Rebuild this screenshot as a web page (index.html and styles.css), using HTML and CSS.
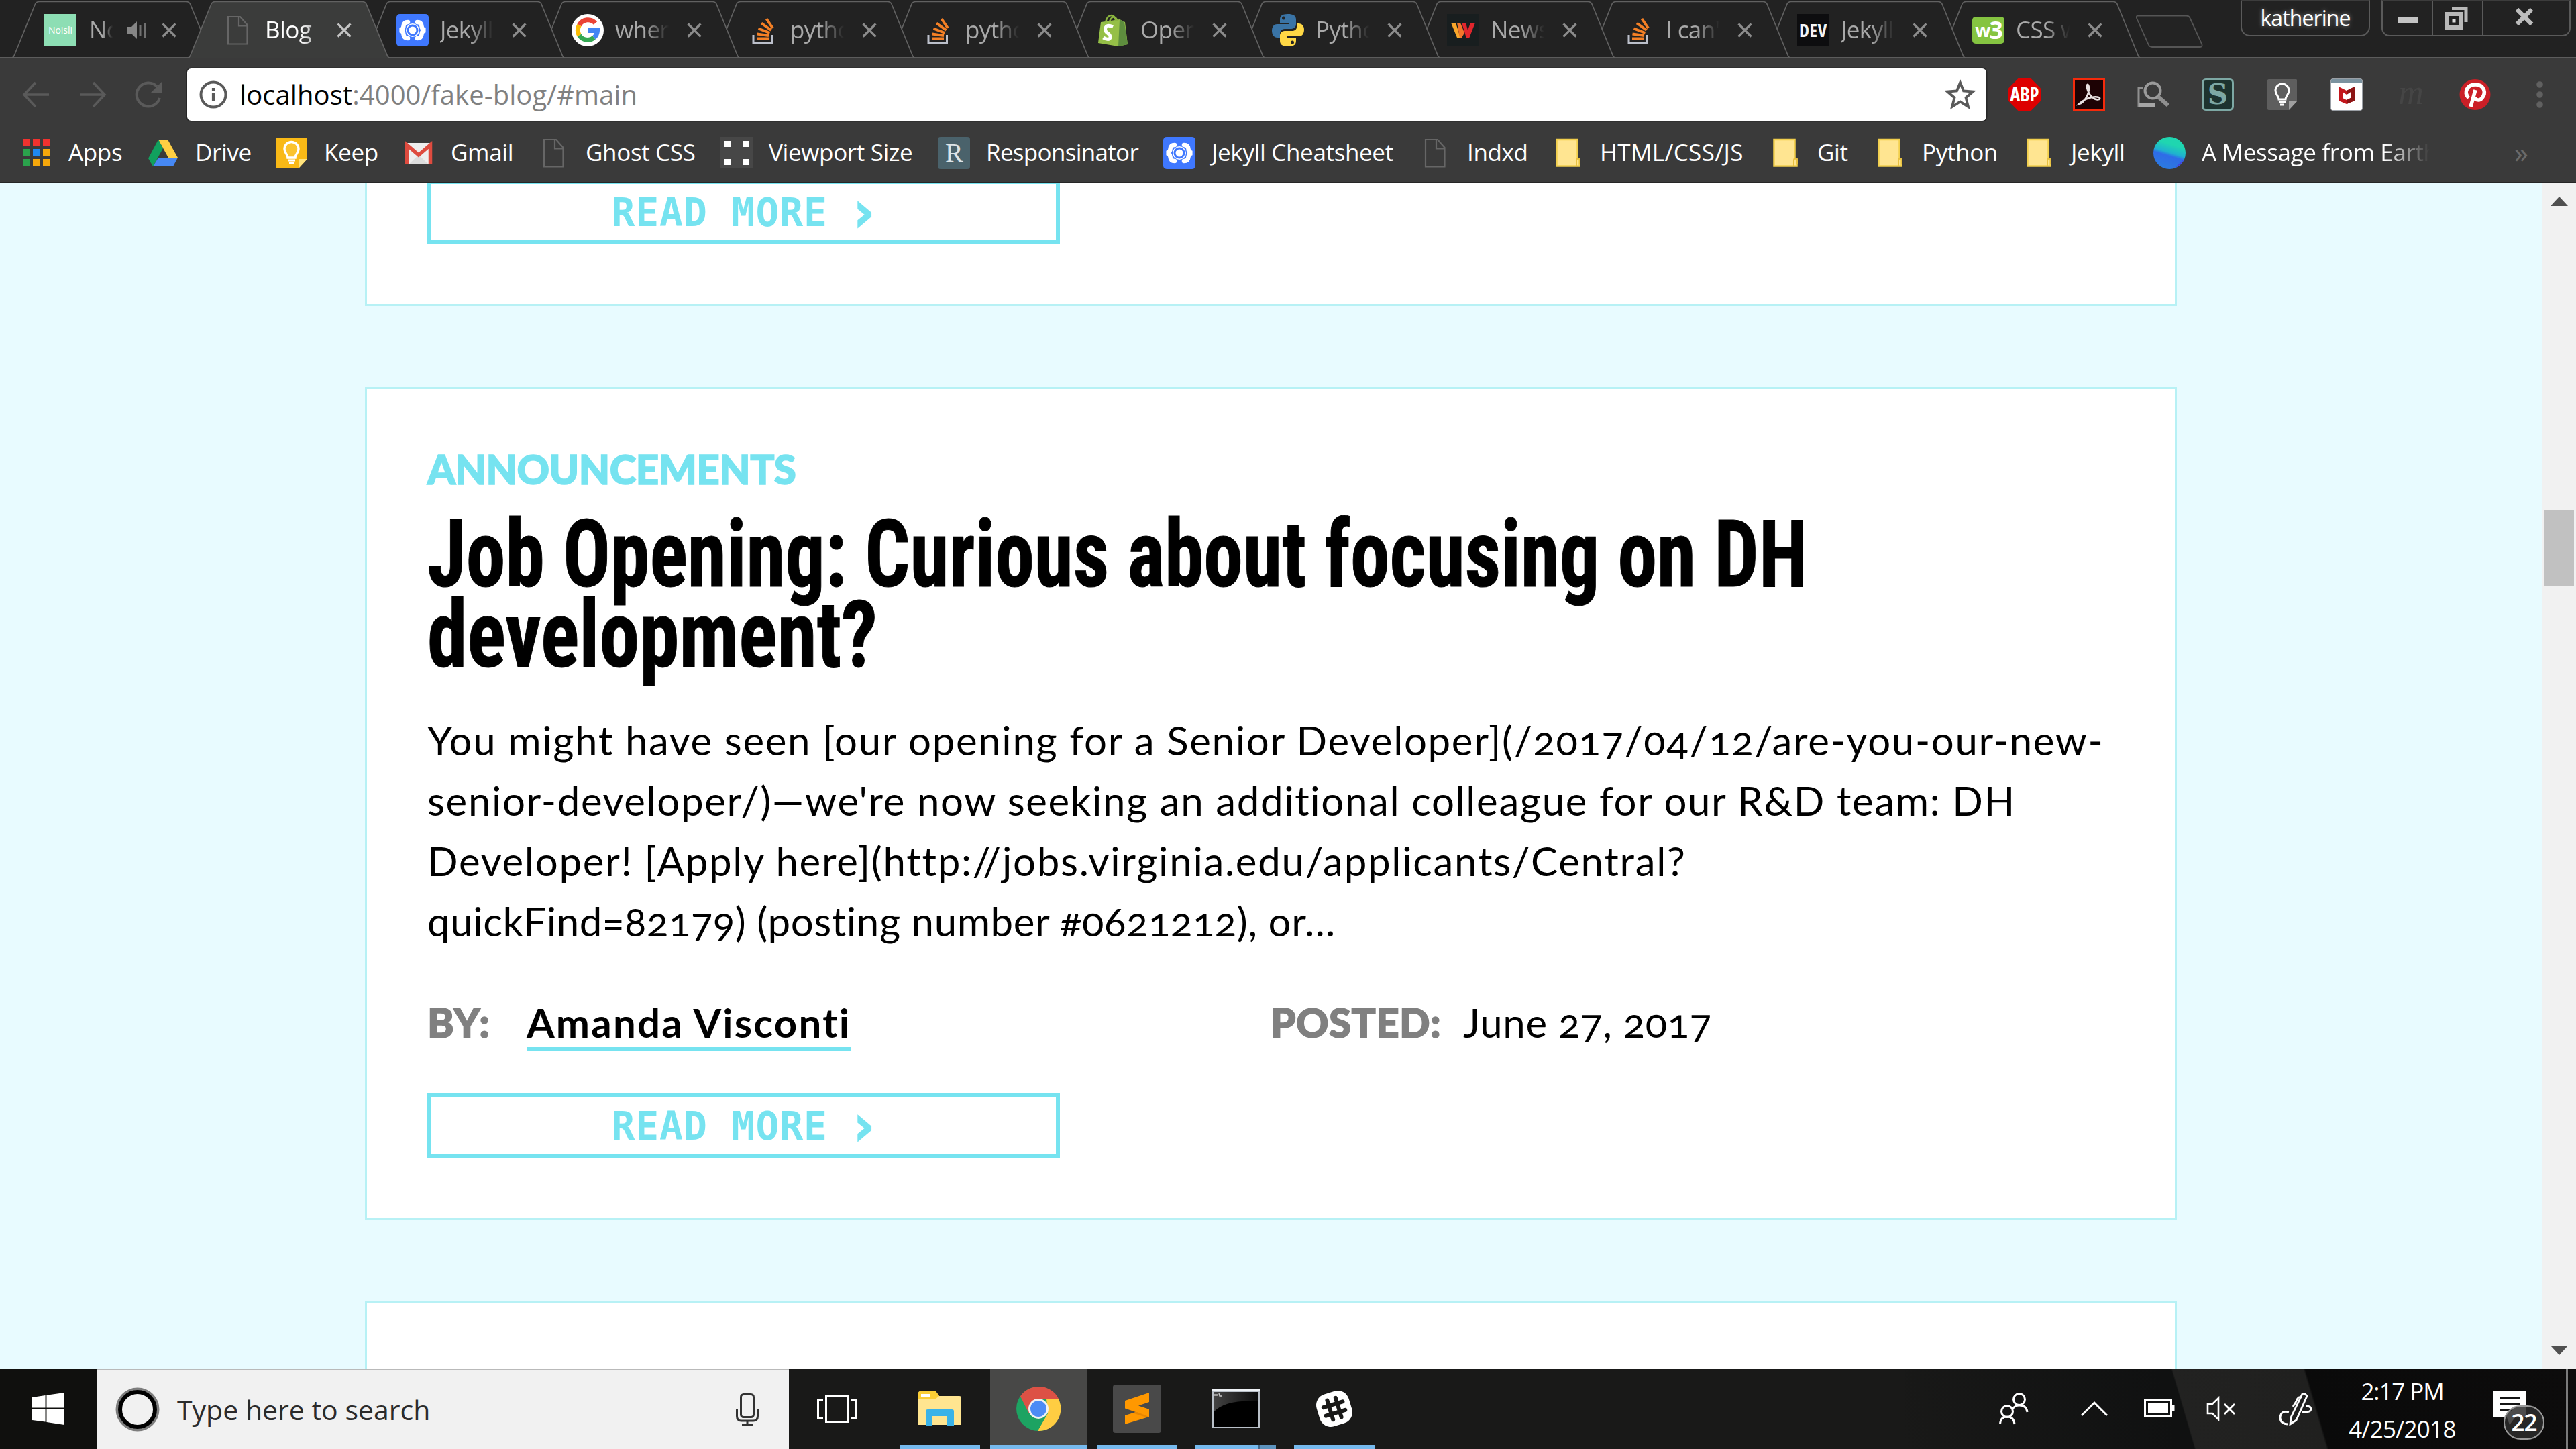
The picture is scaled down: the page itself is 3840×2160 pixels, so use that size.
FILE: index.html
```html
<!DOCTYPE html>
<html lang="en">
<head>
<meta charset="utf-8">
<title>Blog</title>
<link rel="stylesheet" href="styles.css">
</head>
<body>
<svg class="defs" aria-hidden="true">
  <defs>
    <linearGradient id="earth" x1="0.7" y1="0" x2="0.4" y2="1"><stop offset="0.25" stop-color="#1fd6b0"/><stop offset="0.5" stop-color="#1fb0d0"/><stop offset="0.6" stop-color="#2f6be8"/><stop offset="1" stop-color="#2b7be0"/></linearGradient>
    <linearGradient id="cmdshade" x1="0" y1="0" x2="1" y2="0"><stop offset="0" stop-color="#444"/><stop offset="1" stop-color="#0c0c0c"/></linearGradient>
    <symbol id="tab-shape" viewBox="0 0 301 87">
      <path d="M20 43.500L35 6Q36.500 2.500 41 2.500H260Q264.500 2.500 266 6L297 82Q298.500 86 301 86" fill="none" stroke="#616161" stroke-width="1.700"/>
    </symbol>
    <symbol id="tab-shape-full" viewBox="0 0 301 87">
      <path d="M0 86Q2.500 86 4 82L35 6Q36.500 2.500 41 2.500H260Q264.500 2.500 266 6L297 82Q298.500 86 301 86" fill="none" stroke="#616161" stroke-width="1.700"/>
    </symbol>
    <symbol id="tab-shape-active" viewBox="0 0 301 87">
      <path d="M0 86Q2.500 86 4 82L35 6Q36.500 2.500 41 2.500H260Q264.500 2.500 266 6L297 82Q298.500 86 301 86V87H0Z" fill="#3b3c3b"/>
      <path d="M0 86Q2.500 86 4 82L35 6Q36.500 2.500 41 2.500H260Q264.500 2.500 266 6L297 82Q298.500 86 301 86" fill="none" stroke="#616161" stroke-width="1.700"/>
    </symbol>
    <symbol id="close" viewBox="0 0 22 22"><path d="M1.500 1.500L20.500 20.500M20.500 1.500L1.500 20.500" stroke="currentColor" stroke-width="3.200" fill="none"/></symbol>
    <symbol id="doc" viewBox="0 0 48 48"><path d="M10 4H28L38.500 16V44.500H10ZM26 4V17.500H38" fill="none" stroke="#666" stroke-width="2.200"/></symbol>
    <symbol id="jekyll" viewBox="0 0 48 48"><rect width="48" height="48" rx="5" fill="#3f78ff"/><path d="M17 12Q11 12 10.500 18Q10.500 23 5 24Q10.500 25 10.500 30Q11 36 17 36M31 12Q37 12 37.500 18Q37.500 23 43 24Q37.500 25 37.500 30Q37 36 31 36" fill="none" stroke="#fff" stroke-width="6.500" stroke-linecap="round"/><circle cx="24" cy="24" r="10" fill="#fff"/><circle cx="24" cy="24" r="7" fill="none" stroke="#3f78ff" stroke-width="3"/></symbol>
    <symbol id="google" viewBox="0 0 48 48"><circle cx="24" cy="24" r="24" fill="#fff"/><g fill="none" stroke-width="7"><path d="M35.500 13.500A14.800 14.800 0 0 0 11.500 16.500" stroke="#ea4335"/><path d="M11.500 16.500A14.800 14.800 0 0 0 11.500 31.500" stroke="#fbbc05"/><path d="M11.500 31.500A14.800 14.800 0 0 0 33.500 35" stroke="#34a853"/><path d="M24 24.500H38.500A14.800 14.800 0 0 1 33.500 35" stroke="#4285f4"/></g></symbol>
    <symbol id="stack" viewBox="0 0 48 48"><path d="M10 31V42.500H37.500V31" fill="none" stroke="#bcc0cb" stroke-width="3"/><g stroke="#f58025" stroke-width="4"><path d="M15 36.500H33"/><path d="M15.500 29.500L33 32"/><path d="M17.500 21.500L34.500 28"/><path d="M22 13.500L36.500 24"/><path d="M29.500 7L39 21"/></g></symbol>
    <symbol id="shopify" viewBox="0 0 48 48"><path d="M6 12L34 8L42 12L46 45L32 48L2 43Z" fill="#95bf47"/><path d="M34 8L41 12L46 45L32 48Z" fill="#5e8e3e"/><path d="M13 13Q15 2 22 2Q28 3 28 11M19 11Q22 3 27 5Q30 7 30 10" fill="none" stroke="#8ab43f" stroke-width="2.500"/><path d="M24 19Q13 14 12.500 23C12.500 29 21 28 20 35Q18 40 9.500 35" fill="none" stroke="#fff" stroke-width="5"/></symbol>
    <symbol id="python" viewBox="0 0 48 48"><path d="M24 0C13 0 12 4 12 9V13H25V15H8C2 15 0 20 0 25S3 35 8 35H12V29C12 25 15 22 19 22H29C33 22 36 19 36 15V8C36 2 31 0 24 0Z" fill="#3a74a6"/><path d="M24 48C35 48 36 44 36 39V35H23V33H40C46 33 48 28 48 23S45 14 40 14H37V19C37 23 34 25 29 25H19C15 25 12 28 12 32V40C12 46 17 48 24 48Z" fill="#ffd845"/><circle cx="17.500" cy="6" r="2.500" fill="#232323"/><circle cx="30.500" cy="42" r="2.500" fill="#232323"/></symbol>
    <symbol id="wnews" viewBox="0 0 48 48"><rect width="48" height="48" fill="#181e1f"/><path d="M6 13H13L20 35H15Z" fill="#f9a72b"/><path d="M15 13H20L26 28L22 35H19Z" fill="#f2752b"/><path d="M22 13H28L31 24L35 13H42L33 36H29Z" fill="#e1262d"/></symbol>
    <symbol id="folder" viewBox="0 0 48 48"><path d="M7.500 4H38.500V33H41.500V43.500H7.500Z" fill="#ffe591" stroke="#f2cf4d" stroke-width="2.500"/><path d="M37 43V35Q37 32 39.500 32T42 35V41" fill="none" stroke="#e8c040" stroke-width="2"/></symbol>
  </defs>
</svg>

<header class="browser">
  <div class="strip">
    <nav class="tabs">
      <div class="tab first"><svg class="shape"><use href="#tab-shape-full"/></svg><div class="tab-row">
        <span class="noisli">Noisli</span><span class="title short">Noisli</span>
        <svg class="audio" viewBox="0 0 30 30"><path d="M1 10H7L15 2V28L7 20H1Z" fill="#868686"/><path d="M20 7V23M26.500 4V26" stroke="#707070" stroke-width="3"/></svg>
        <svg class="x"><use href="#close"/></svg></div></div>
      <div class="tab active"><svg class="shape"><use href="#tab-shape-active"/></svg><div class="tab-row"><svg class="fav"><use href="#doc"/></svg><span class="title">Blog</span><svg class="x"><use href="#close"/></svg></div></div>
      <div class="tab"><svg class="shape"><use href="#tab-shape"/></svg><div class="tab-row"><svg class="fav"><use href="#jekyll"/></svg><span class="title">Jekyll</span><svg class="x"><use href="#close"/></svg></div></div>
      <div class="tab"><svg class="shape"><use href="#tab-shape"/></svg><div class="tab-row"><svg class="fav"><use href="#google"/></svg><span class="title">where</span><svg class="x"><use href="#close"/></svg></div></div>
      <div class="tab"><svg class="shape"><use href="#tab-shape"/></svg><div class="tab-row"><svg class="fav"><use href="#stack"/></svg><span class="title">python</span><svg class="x"><use href="#close"/></svg></div></div>
      <div class="tab"><svg class="shape"><use href="#tab-shape"/></svg><div class="tab-row"><svg class="fav"><use href="#stack"/></svg><span class="title">python</span><svg class="x"><use href="#close"/></svg></div></div>
      <div class="tab"><svg class="shape"><use href="#tab-shape"/></svg><div class="tab-row"><svg class="fav"><use href="#shopify"/></svg><span class="title">Open</span><svg class="x"><use href="#close"/></svg></div></div>
      <div class="tab"><svg class="shape"><use href="#tab-shape"/></svg><div class="tab-row"><svg class="fav"><use href="#python"/></svg><span class="title">Python</span><svg class="x"><use href="#close"/></svg></div></div>
      <div class="tab"><svg class="shape"><use href="#tab-shape"/></svg><div class="tab-row"><svg class="fav"><use href="#wnews"/></svg><span class="title">News</span><svg class="x"><use href="#close"/></svg></div></div>
      <div class="tab"><svg class="shape"><use href="#tab-shape"/></svg><div class="tab-row"><svg class="fav"><use href="#stack"/></svg><span class="title">I can't</span><svg class="x"><use href="#close"/></svg></div></div>
      <div class="tab"><svg class="shape"><use href="#tab-shape"/></svg><div class="tab-row"><span class="fav dev">DEV</span><span class="title">Jekyll</span><svg class="x"><use href="#close"/></svg></div></div>
      <div class="tab"><svg class="shape"><use href="#tab-shape"/></svg><div class="tab-row"><span class="fav w3"><b>w</b><b class="three">3</b></span><span class="title">CSS w</span><svg class="x"><use href="#close"/></svg></div></div>
      <svg class="newtab" viewBox="0 0 102 50"><path d="M4 1.500H76Q80 1.500 81.500 5L99 43Q101 48 97 48H25Q21 48 19.500 44L2 5Q1 1.500 4 1.500Z" fill="#232323" stroke="#555" stroke-width="1.800"/></svg>
    </nav>
    <div class="user">katherine</div>
    <div class="winctl">
      <span class="wc"><svg width="32" height="14" viewBox="0 0 32 14"><rect x="1" y="5" width="30" height="9" fill="#c4c4c4"/></svg></span>
      <span class="wc mid"><svg width="36" height="36" viewBox="0 0 36 36"><path d="M11 3.500H32V24" fill="none" stroke="#b8b8b8" stroke-width="5"/><rect x="4" y="12" width="20" height="20" fill="#222" stroke="#b8b8b8" stroke-width="6"/><rect x="11.500" y="19.500" width="5" height="5" fill="#ddd"/></svg></span>
      <span class="wc wide"><svg width="28" height="26" viewBox="0 0 28 26"><path d="M3 2L25 24M25 2L3 24" stroke="#bdbdbd" stroke-width="6.500"/></svg></span>
    </div>
  </div>

  <div class="toolbar">
    <div class="navbtns">
      <svg width="42" height="42" viewBox="0 0 42 42"><path d="M20 3L3 21L20 39M3 21H40" fill="none" stroke="#5a5a5a" stroke-width="3.600"/></svg>
      <svg width="42" height="42" viewBox="0 0 42 42"><path d="M22 3L39 21L22 39M39 21H2" fill="none" stroke="#5a5a5a" stroke-width="3.600"/></svg>
      <svg width="42" height="42" viewBox="0 0 42 42"><path d="M37 26A17.500 17.500 0 1 1 33 9" fill="none" stroke="#5a5a5a" stroke-width="4"/><path d="M41 1V18H24Z" fill="#5a5a5a"/></svg>
    </div>
    <div class="omnibox">
      <svg width="42" height="42" viewBox="0 0 42 42"><circle cx="21" cy="21" r="18.500" fill="none" stroke="#5a5a5a" stroke-width="4"/><path d="M21 11V15M21 18.500V31" stroke="#5a5a5a" stroke-width="4.200"/></svg>
      <span class="url">localhost<i>:4000/fake-blog/#main</i></span>
      <svg class="star" width="48" height="48" viewBox="0 0 48 48"><path d="M24 6L29 18.500L43 19.500L32.500 28.500L36 42L24 34.500L12 42L15.500 28.500L5 19.500L19 18.500Z" fill="none" stroke="#5a5a5a" stroke-width="3.800"/></svg>
    </div>
    <div class="exts">
      <span class="abp">ABP</span>
      <svg viewBox="0 0 48 48"><rect x="1.500" y="1.500" width="45" height="45" fill="#1d0204" stroke="#f52a0b" stroke-width="3"/><path d="M9 38C17 36 24 24 24 14C23 5 19 9 22 17C25 26 32 33 39 31C43 29 37 26 28 28C18 30 13 34 9 38Z" fill="none" stroke="#e8e0e0" stroke-width="2.600"/></svg>
      <svg viewBox="0 0 48 48"><path d="M9 14H2V41H26" fill="none" stroke="#8f8f8f" stroke-width="3"/><path d="M2 36H26V43H2Z" fill="#a5a5a5"/><circle cx="23" cy="18" r="11.500" fill="none" stroke="#9a9a9a" stroke-width="4"/><path d="M31 27L46 40" stroke="#8f8f8f" stroke-width="6"/></svg>
      <span class="stylish">S</span>
      <svg viewBox="0 0 48 48"><path d="M4 1H45Q46 1 46 3V34L34 47H4Q2 47 2 45V3Q2 1 4 1Z" fill="#5e5e5e"/><path d="M46 34L34 47V34Z" fill="#a0a0a0"/><path d="M19 31C19 26 14 24 14 18A10 10 0 0 1 34 18C34 24 29 26 29 31Z" fill="none" stroke="#fff" stroke-width="3"/><path d="M19 35.500H29M21 39H27" stroke="#fff" stroke-width="3"/></svg>
      <svg viewBox="0 0 48 48"><rect x="0.500" y="0.500" width="47" height="47" rx="3" fill="#fff" stroke="#9a9fa5"/><path d="M1 3Q1 1 3 1H45Q47 1 47 3V7H1Z" fill="#7b929f"/><path d="M12 12L24 18L36 12V33L24 38L12 33ZM18 20V29L24 32L30 29V20L24 24Z" fill="#c3161c" fill-rule="evenodd"/><path d="M24 18L36 12V33L24 38V32L30 29V20L24 24Z" fill="#8c1515"/></svg>
      <span class="mext">m</span>
      <svg viewBox="0 0 48 48"><circle cx="23.500" cy="24" r="23" fill="#cb1f27"/><path d="M14 29C6 20 12 9 24 9C38 9 40 22 34 29C30 34 24 32 23 28M24 17L17 42" fill="none" stroke="#fff" stroke-width="5.500"/></svg>
      <svg viewBox="0 0 48 48"><g fill="#606060"><circle cx="24" cy="9" r="4.800"/><circle cx="24" cy="24" r="4.800"/><circle cx="24" cy="39" r="4.800"/></g></svg>
    </div>
  </div>

  <nav class="bookmarks">
    <a><svg viewBox="0 0 48 48"><path d="M4 3h10v10h-10zM19 3h10v10h-10zM34 3h10v10h-10z" fill="#f0322f"/><path d="M4 18h10v10h-10zM4 33h10v10h-10z" fill="#2ba24c"/><path d="M19 18h10v10h-10z" fill="#1e88f0"/><path d="M34 18h10v10h-10zM19 33h10v10h-10zM34 33h10v10h-10z" fill="#f5a70b"/></svg>Apps</a>
    <a><svg viewBox="0 0 48 48"><path d="M17 4L31 4L46 31H32Z" fill="#ffcf43"/><path d="M17 4L24 17L9 44L2 32Z" fill="#11a05e"/><path d="M17 31H46L39 44H9Z" fill="#4688f4"/></svg>Drive</a>
    <a><svg viewBox="0 0 48 48"><path d="M2 1H46Q47 1 47 3V33L34 47H2Q0 47 0 45V3Q0 1 2 1Z" fill="#f9b916"/><path d="M47 33L34 47V33Z" fill="#ffe37e"/><path d="M18 31C18 26 13 24 13 18A10.500 10.500 0 0 1 34 18C34 24 29 26 29 31Z" fill="#fbc32e" stroke="#fff" stroke-width="3.400"/><path d="M18 35H29M20 39H27" stroke="#fff" stroke-width="3"/></svg>Keep</a>
    <a><svg viewBox="0 0 48 48"><rect x="4" y="9" width="40" height="32" rx="2" fill="#eee"/><path d="M9 41L24 27L39 41Z" fill="#dcdcdc"/><path d="M6.500 41V12L24 27L41.500 12V41" fill="none" stroke="#de4b3f" stroke-width="5.500"/></svg>Gmail</a>
    <a><svg viewBox="0 0 48 48"><use href="#doc"/></svg>Ghost CSS</a>
    <a><svg viewBox="0 0 48 48"><rect width="48" height="46" fill="#474747"/><path d="M6 6h9v9h-9zM33 6h9v9h-9zM6 33h9v9h-9zM33 33h9v9h-9z" fill="#fff"/></svg>Viewport Size</a>
    <a class="tight"><span class="resp">R</span>Responsinator</a>
    <a><svg viewBox="0 0 48 48"><use href="#jekyll"/></svg>Jekyll Cheatsheet</a>
    <a><svg viewBox="0 0 48 48"><use href="#doc"/></svg>Indxd</a>
    <a class="spread"><svg viewBox="0 0 48 48"><use href="#folder"/></svg>HTML/CSS/JS</a>
    <a><svg viewBox="0 0 48 48"><use href="#folder"/></svg>Git</a>
    <a><svg viewBox="0 0 48 48"><use href="#folder"/></svg>Python</a>
    <a><svg viewBox="0 0 48 48"><use href="#folder"/></svg>Jekyll</a>
    <a class="faded"><svg viewBox="0 0 48 48"><circle cx="24" cy="24" r="24" fill="url(#earth)"/><path d="M32 46A24 24 0 0 0 45 34Z" fill="#4b3fe0"/></svg><span>A Message from Earth</span></a>
    <a class="more">»</a>
  </nav>
</header>

<main class="viewport">
  <div class="page">
    <article class="card above"><a class="readmore">READ MORE <span>›</span></a></article>
    <article class="card post">
      <p class="category">ANNOUNCEMENTS</p>
      <h2><span class="h1l">Job Opening: Curious about focusing on DH</span><span class="h2l">development?</span></h2>
      <p class="excerpt"><span class="l1">You might have seen [our opening for a Senior Developer](/2017/04/12/are-you-our-new-</span><span class="l2">senior-developer/)—we're now seeking an additional colleague for our R&amp;D team: DH</span><span class="l3">Developer! [Apply here](http://jobs.virginia.edu/applicants/Central?</span><span class="l4">quickFind=82179) (posting number #0621212), or…</span></p>
      <div class="meta"><b class="by">BY:</b><span><a class="author">Amanda Visconti</a></span><b>POSTED:</b><span class="posted">June 27, 2017</span></div>
      <a class="readmore">READ MORE <span>›</span></a>
    </article>
    <article class="card below"></article>
  </div>
  <div class="scrollbar">
    <svg width="26" height="14" viewBox="0 0 26 14"><path d="M13 0L26 14H0Z" fill="#505050"/></svg>
    <span class="thumb"></span>
    <svg class="down" width="26" height="14" viewBox="0 0 26 14"><path d="M13 14L26 0H0Z" fill="#505050"/></svg>
  </div>
</main>

<footer class="taskbar">
  <div class="start"><svg width="48" height="48" viewBox="0 0 48 48"><path d="M0 7L19.500 4V22.500H0ZM21.500 3.700L48 0V22.500H21.500ZM0 24.500H19.500V43.500L0 41ZM21.500 24.500H48V48L21.500 44Z" fill="#fff"/></svg></div>
  <div class="search">
    <svg width="66" height="66" viewBox="0 0 66 66"><circle cx="33" cy="33" r="30.500" fill="none" stroke="#7d7d7d" stroke-width="4"/><circle cx="33" cy="33" r="26" fill="none" stroke="#000" stroke-width="6"/></svg>
    <span class="prompt">Type here to search</span>
    <svg class="mic" width="34" height="48" viewBox="0 0 34 48"><rect x="7.500" y="1.500" width="19" height="34" rx="4" fill="none" stroke="#333" stroke-width="3"/><path d="M1.500 24V34Q1.500 41 8 41H26Q32.500 41 32.500 34V24M17 41V47M9 46.500H25" fill="none" stroke="#333" stroke-width="3"/></svg>
  </div>
  <div class="apps">
    <div class="app plain"><svg width="60" height="42" viewBox="0 0 60 42"><path d="M13.500 1.500H46.500V40.500H13.500ZM9 7.500H1.500V34.500H9M51 7.500H58.500V34.500H51" fill="none" stroke="#fff" stroke-width="3"/></svg></div>
    <div class="app"><svg width="64" height="54" viewBox="0 0 64 54"><path d="M0 4Q0 1 3 1H26L31 8H61Q64 8 64 11V51H0Z" fill="#ffe590"/><path d="M0 4Q0 1 3 1H26L31 8L26 12H0Z" fill="#fbce35"/><rect x="4" y="5" width="14" height="4" fill="#fff"/><path d="M11 53V31Q11 28 14 28H50Q53 28 53 31V53H43V38H21V53Z" fill="#3ab3e8"/></svg></div>
    <div class="app current"><svg width="66" height="66" viewBox="0 0 66 66"><circle cx="33" cy="33" r="33" fill="#1da362"/><path d="M6 14.500A33 33 0 0 1 63 18H33L19 40Z" fill="#dd5145"/><path d="M63.200 19A33 33 0 0 1 32 66L47 40L45 18.500Z" fill="#ffcd42"/><circle cx="33" cy="33" r="15" fill="#f1f1f1"/><circle cx="33" cy="33" r="12" fill="#4c8bf5"/></svg></div>
    <div class="app"><svg width="72" height="72" viewBox="0 0 72 72"><rect width="72" height="72" rx="4" fill="#494949"/><path d="M18 24L54 12V26L38 31.500L54 37V48L18 59V46L34 41L18 35.500Z" fill="#ff9800"/><path d="M34 41L38 41.500L54 48V37L42 33Z" fill="#ff9800"/><path d="M30 42.500L36 41L54 48L50 49Z" fill="#e88600"/></svg></div>
    <div class="app split"><svg width="71" height="58" viewBox="0 0 71 58"><rect width="71" height="58" fill="#b9c0c8"/><rect x="0" y="0" width="71" height="3" fill="#eef2f6"/><rect x="2" y="4" width="67" height="52" fill="#000"/><path d="M2 4H69V18Q20 15 2 34Z" fill="url(#cmdshade)"/><path d="M4 7V10M7 7V10M10 6L11 10H14" stroke="#ccc" stroke-width="1.300" fill="none"/></svg></div>
    <div class="app"><svg width="58" height="58" viewBox="0 0 58 58"><g transform="rotate(-17 29 29)"><rect x="4" y="4" width="50" height="50" rx="17" fill="#fff"/><path d="M22.500 14V44M35.500 14V44M14 22.500H44M14 35.500H44" stroke="#191918" stroke-width="6" stroke-linecap="round"/></g></svg></div>
  </div>
  <div class="tray">
    <svg width="44" height="48" viewBox="0 0 44 48"><g fill="none" stroke="#fff" stroke-width="3"><circle cx="30" cy="10" r="8.500"/><path d="M20 24Q24 19 30 19Q41 19 42 29"/><circle cx="12" cy="28" r="8.500"/><path d="M1.500 47Q2 36 12 36T23 47"/></g></svg>
    <svg width="40" height="24" viewBox="0 0 40 24"><path d="M1 22L20 3L39 22" fill="none" stroke="#fff" stroke-width="3"/></svg>
    <svg width="46" height="28" viewBox="0 0 46 28"><rect x="1.500" y="1.500" width="39" height="24" fill="none" stroke="#fff" stroke-width="3"/><rect x="6" y="6" width="30" height="15" fill="#fff"/><rect x="42" y="9" width="3.500" height="9" fill="#fff"/></svg>
    <svg width="44" height="38" viewBox="0 0 44 38"><path d="M2 12H9L18 3V35L9 26H2ZM27 12L42 27M42 12L27 27" fill="none" stroke="#fff" stroke-width="2.600"/></svg>
    <svg width="50" height="50" viewBox="0 0 50 50"><g fill="none" stroke="#fff" stroke-width="2.800"><path d="M18 38L35 3Q38 1 42 6L26 42L17 48Z"/><path d="M34 8Q28 6 26 14L21 22M15 30Q3 27 2 38Q2 48 14 48M41 21Q48 21 48 26Q47 31 35 30"/></g></svg>
    <div class="clock"><span>2:17 PM</span><span class="date">4/25/2018</span></div>
    <div class="notify"><svg width="48" height="52" viewBox="0 0 48 52"><path d="M0 0H48V39H32L24 50L20 39H0Z" fill="#fff"/><path d="M9 10.500H39M9 19.500H39M9 28.500H27" stroke="#141414" stroke-width="3"/></svg><span class="badge">22</span></div>
    <i class="desk"></i>
  </div>
</footer>
</body>
</html>
```
FILE: styles.css
```css
* { box-sizing: border-box; }
body { margin: 0; width: 3840px; height: 2160px; overflow: hidden; display: flex; flex-direction: column; font-family: "Open Sans", sans-serif; background: #191918; }
svg { display: block; flex: none; }
.defs { position: absolute; width: 0; height: 0; }
p, h2 { margin: 0; }

/* Browser chrome */
.browser { height: 273px; flex: none; background: #3a3a3a; border-bottom: 2px solid #262626; color: #fff; }
.strip { height: 87px; display: flex; background: #222; box-shadow: inset 0 -2px #5c5c5c; }
.tabs { display: flex; width: 3321px; padding-left: 16px; height: 87px; }
.tab { display: grid; width: 301px; height: 87px; flex: none; margin-right: -40px; }
.tab > * { grid-area: 1 / 1; }
.tab.first { width: 304px; }
.tab.active { z-index: 1; }
.shape { width: 100%; height: 87px; }
.tab-row { display: flex; align-items: center; height: 48px; margin-top: 21px; padding-left: 50px; color: #a9a9a9; }
.fav { width: 48px; height: 48px; flex: none; }
.title { width: 82px; margin-left: 17px; padding-bottom: 4px; overflow: hidden; white-space: nowrap; font-size: 35px; letter-spacing: -0.6px; flex: none; -webkit-mask-image: linear-gradient(90deg, #000 55%, transparent 98%); mask-image: linear-gradient(90deg, #000 55%, transparent 98%); }
.title.short { width: 36px; margin-left: 19px; }
.active .title { color: #fff; -webkit-mask-image: linear-gradient(90deg, #000 65%, rgba(0,0,0,.4)); mask-image: linear-gradient(90deg, #000 65%, rgba(0,0,0,.4)); }
.x { width: 22px; height: 22px; margin-left: 25px; color: #8c8c8c; }
.active .x { color: #c4c4c4; }
.audio { width: 30px; height: 30px; margin-left: 20px; }
.audio + .x { margin-left: 22px; }
.noisli { width: 48px; height: 48px; background: #8ddeb4; color: #fff; font-size: 14px; line-height: 47px; text-align: center; flex: none; }
.dev { background: #0d0d0f; color: #f4f4f4; font: 700 27px/48px "Open Sans", sans-serif; font-stretch: 75%; text-align: center; letter-spacing: 0.5px; }
.w3 { height: 40px; background: #85c441; border-radius: 5px; display: flex; justify-content: center; align-items: center; color: #fff; line-height: 34px; font-size: 27px; letter-spacing: -2px; }
.w3 .three { font-size: 36px; }
.newtab { width: 102px; height: 50px; margin: 22px 0 0 32px; flex: none; }
.user { margin-left: 19px; width: 193px; height: 54px; border: 2px solid #5a5a5a; border-top-color: #3c3c3c; border-radius: 0 0 14px 14px; text-align: center; font-size: 32px; line-height: 50px; letter-spacing: -0.9px; text-shadow: 0 0 6px #888; }
.winctl { margin-left: 17px; display: flex; width: 282px; height: 54px; border: 2px solid #5a5a5a; border-top-color: #3c3c3c; border-radius: 0 0 12px 12px; }
.wc { width: 75px; display: flex; align-items: center; justify-content: center; border-right: 2px solid #5a5a5a; }
.wc.mid { padding-right: 3px; }
.wc.wide { flex: 1; border: 0; padding-right: 6px; padding-bottom: 5px; }

.toolbar { display: flex; height: 78px; margin-top: 15px; align-items: center; }
.navbtns { display: flex; width: 279px; padding-left: 33px; gap: 42px; }
.omnibox { width: 2682px; height: 78px; background: #fff; border-radius: 6px; box-shadow: 0 0 0 1.5px #262626; display: flex; align-items: center; padding-left: 18px; }
.url { margin-left: 18px; color: #000; font-size: 40px; line-height: 54px; padding-bottom: 1px; letter-spacing: 0.07px; }
.url i { color: #808080; font-style: normal; }
.star { margin-left: auto; margin-right: 15px; }
.exts { display: flex; gap: 48px; margin-left: 33px; align-items: center; }
.exts > * { width: 48px; height: 48px; flex: none; }
.abp { background: #d00; clip-path: polygon(30% 0, 70% 0, 100% 30%, 100% 70%, 70% 100%, 30% 100%, 0 70%, 0 30%); font: 700 28px/47px "Open Sans", sans-serif; font-stretch: 75%; text-align: center; }
.stylish { border: 3px solid #7da8a4; background: #1d332f; border-radius: 6px; color: #7da8a4; font: 700 42px/41px "DejaVu Serif", serif; text-align: center; }
.mext { color: #454545; font: italic 52px/42px "Liberation Serif", serif; text-align: center; }

.bookmarks { display: grid; grid-template-columns: 189px 192px 189px 201px 273px 324px 336px 381px 198px 324px 156px 222px 195px 538px 60px; padding-left: 30px; height: 91px; align-items: center; }
.bookmarks a { display: flex; gap: 24px; align-items: center; height: 48px; font-size: 35px; line-height: 44px; padding-top: 2px; letter-spacing: -0.35px; white-space: nowrap; }
.bookmarks svg, .resp { width: 48px; height: 48px; flex: none; margin-top: 2px; }
.bookmarks .spread { letter-spacing: 0.4px; }
.bookmarks .tight { letter-spacing: -0.7px; }
.resp { background: #4a626b; border-radius: 4px; font: 40px/48px "Liberation Serif", serif; text-align: center; color: #dde4e6; }
.faded span { width: 340px; overflow: hidden; -webkit-mask-image: linear-gradient(90deg, #000 80%, transparent); mask-image: linear-gradient(90deg, #000 80%, transparent); }
.bookmarks .more { color: #6a6a6a; font-size: 42px; }

/* Page */
.viewport { display: flex; height: 1767px; flex: none; }
.page { width: 3789px; background: #e8fbff; overflow: hidden; padding-left: 544px; display: flex; flex-direction: column; gap: 121px; }
.card { width: 2701px; background: #fff; border: 3px solid #b7f1f5; padding: 74px 89px 90px 90px; flex: none; display: flex; flex-direction: column; }
.above { height: 400px; margin-top: -217px; padding-bottom: 89px; justify-content: flex-end; }
.post { height: 1242px; }
.below { height: 300px; }
.category { font: 900 60px/90px Lato, sans-serif; color: #76e3f0; letter-spacing: -0.5px; -webkit-text-stroke: 1.6px #76e3f0; }
h2 { margin-top: 23px; font: 700 139px/120px Roboto, sans-serif; font-stretch: 75%; color: #000; }
h2 span { display: block; width: max-content; transform-origin: 0 50%; white-space: nowrap; -webkit-text-stroke: 1px #000; }
.h1l { transform: scaleX(.848); }
.h2l { transform: scaleX(.862); }
.excerpt { margin-top: 51px; font: 400 60px/90px Lato, sans-serif; font-variant-numeric: oldstyle-nums; color: #000; }
.excerpt span { display: block; white-space: nowrap; }
.l1 { letter-spacing: 1.63px; }
.l2 { letter-spacing: 1.61px; }
.l3 { letter-spacing: 1.7px; }
.l4 { letter-spacing: 0.57px; }
.meta { margin-top: 61px; display: grid; grid-template-columns: 148px 1109px 287px 1fr; font: 400 60px/90px Lato, sans-serif; font-variant-numeric: oldstyle-nums; color: #000; }
.meta b { font-weight: 900; color: #808080; letter-spacing: 0.4px; -webkit-text-stroke: 1.6px #808080; }
.meta .by { letter-spacing: 1px; }
.posted { letter-spacing: 0.7px; }
.author { font-weight: 700; letter-spacing: 2.2px; border-bottom: 6px solid #76e3f0; }
.readmore { width: 943px; height: 96px; margin-top: auto; border: 6px solid #76e3f0; color: #76e3f0; font: 700 58px/86px "DejaVu Sans Mono", monospace; letter-spacing: 0.9px; text-align: center; white-space: pre; }
.readmore span { display: inline-block; transform: scale(1.4); transform-origin: 50% 54%; -webkit-text-stroke: 1.5px #76e3f0; }
.scrollbar { width: 51px; background: #f1f1f1; display: flex; flex-direction: column; align-items: center; padding: 20px 0; }
.thumb { width: 45px; height: 114px; background: #c1c1c1; margin-top: 453px; }
.down { margin-top: auto; }

/* Taskbar */
.taskbar { display: flex; height: 120px; background: #191918; color: #fff; }
.start { width: 144px; display: flex; align-items: center; justify-content: center; background: #10100e; }
.search { width: 1032px; background: #f1f1f1; border-top: 2px solid #b9b9b9; display: flex; align-items: center; padding-left: 28px; color: #2b2b2b; font-size: 41px; }
.prompt { margin-left: 26px; padding-top: 0; }
.mic { margin-left: auto; margin-right: 45px; }
.apps { display: flex; gap: 3px; }
.app { width: 144px; display: flex; align-items: center; justify-content: center; background: linear-gradient(#76b9ed, #76b9ed) 50% 100% / 120px 6px no-repeat; }
.plain { background: none; margin-right: 6px; }
.current { background: linear-gradient(#76b9ed, #76b9ed) 0 100% / 144px 6px no-repeat, #484847; }
.split { background: linear-gradient(90deg, #76b9ed 93px, #41688a 93px, #41688a 96px, #5d93be 96px) 12px 100% / 120px 6px no-repeat; }
.tray { margin-left: auto; width: 1000px; display: flex; align-items: center; padding-left: 140px; background: linear-gradient(73.7deg, #191918 0, #101111 395px, #101111 414px, #222221 416px, #20201f 603px, #0a0a0a 606px, #0d0c0c 100%); }
.tray svg:nth-child(2) { margin-left: 78px; }
.tray svg:nth-child(3) { margin-left: 54px; }
.tray svg:nth-child(4) { margin-left: 47px; }
.tray svg:nth-child(5) { margin-left: 64px; }
.clock { width: 180px; margin-left: 44px; display: flex; flex-direction: column; align-items: center; font-size: 35px; line-height: 56px; letter-spacing: -1.1px; padding-top: 3px; }
.date { letter-spacing: -0.7px; }
.notify { position: relative; margin-left: 46px; }
.badge { position: absolute; left: 15px; top: 21px; width: 61px; height: 51px; border: 2px solid #9b9b9b; border-radius: 26px; background: rgba(45,45,45,.85); font-size: 35px; font-weight: 600; line-height: 46px; text-align: center; letter-spacing: -1px; }
.desk { margin-left: auto; margin-right: 12px; width: 3px; height: 120px; background: #7b7b7b; }
```
